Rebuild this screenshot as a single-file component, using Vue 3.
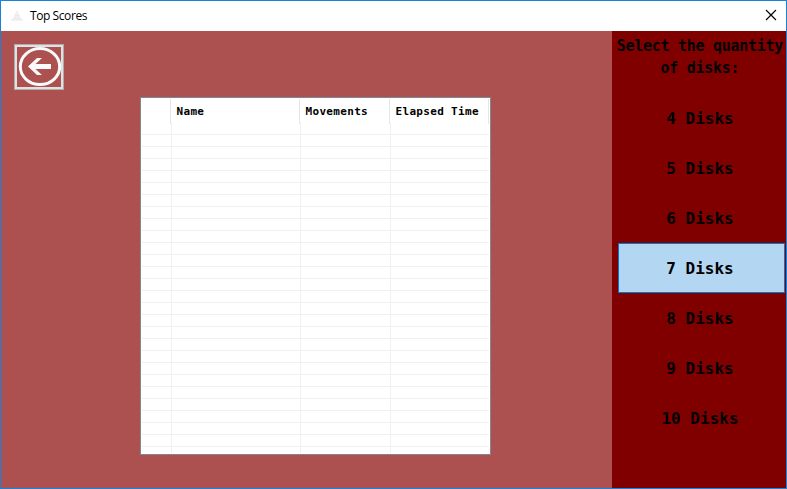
<script setup>
import { ref } from 'vue'

const counts = [4, 5, 6, 7, 8, 9, 10]
const selected = ref(7)
const columns = ['', 'Name', 'Movements', 'Elapsed Time']
const rows = 28
</script>

<template>
  <div class="window">
    <header class="titlebar">
      <svg class="app-icon" width="12" height="10" viewBox="0 0 12 10">
        <path d="M5 0h2v2h1v2h1v2h1v2h2v2H0V8h2V6h1V4h1V2h1z" fill="#f3eff1" />
        <path d="M4 4.5h4M2 7.5h8" stroke="#ece7ea" />
      </svg>
      <span class="title">Top Scores</span>
      <svg class="close" width="12" height="12" viewBox="0 0 12 12">
        <path d="M1 1l10 10M11 1L1 11" stroke="#000" stroke-width="1.15" />
      </svg>
    </header>
    <div class="content">
      <main class="main">
        <button class="back" aria-label="Back">
          <svg width="44" height="40" viewBox="0 0 44 40">
            <ellipse cx="23" cy="19.6" rx="19.7" ry="18" fill="none" stroke="#fafafa" stroke-width="3" />
            <path d="M11 19.6L20 11H25L18.5 17H34V22H18.5L25 28H20Z" fill="#fafafa" />
          </svg>
        </button>
        <section class="table">
          <div class="head">
            <div v-for="(c, i) in columns" :key="i" class="th"><span>{{ c }}</span></div>
          </div>
          <div class="body">
            <div v-for="r in rows" :key="r" class="row">
              <i v-for="(c, i) in columns" :key="i" class="td"></i>
            </div>
          </div>
        </section>
      </main>
      <aside class="side">
        <h2 class="prompt"><span>Select the quantity</span><span>of disks:</span></h2>
        <button
          v-for="n in counts"
          :key="n"
          class="disk"
          :class="{ active: n === selected }"
          @click="selected = n"
        >{{ n }} Disks</button>
      </aside>
    </div>
  </div>
</template>

<style>
body { overflow: hidden; }
</style>

<style scoped>
* { box-sizing: border-box; }
.window {
  width: 787px;
  height: 489px;
  display: flex;
  flex-direction: column;
  border: 1px solid #1883d7;
  background: #fff;
}
.titlebar {
  height: 30px;
  flex: none;
  display: flex;
  align-items: center;
  padding: 0 9px 0 10px;
}
.app-icon { margin: -1px 7px 0 0; }
.title {
  flex: 1;
  font: 12px/16px "Open Sans", "Noto Sans", sans-serif;
  letter-spacing: -0.42px;
  color: #000;
}
.close { margin-top: -2px; }
.content { flex: 1; display: flex; min-height: 0; }
.main {
  width: 611px;
  display: flex;
  align-items: flex-start;
  background: #ac5150;
}
.back {
  width: 50px;
  height: 46px;
  margin: 13px 0 0 13px;
  padding: 0;
  display: flex;
  align-items: center;
  justify-content: center;
  border: 1px solid #adadad;
  box-shadow: inset 0 0 0 2px #e1e1e1;
  background: #ac5150;
}
.back svg { display: block; }
.table {
  width: 351px;
  height: 358px;
  margin: 66px 0 0 76px;
  border: 1px solid #828790;
  padding: 1px;
  background: #fff;
  overflow: hidden;
}
.head, .row {
  display: grid;
  grid-template-columns: 29px 129px 90px 99px;
}
.head { height: 24px; }
.th {
  border-right: 1px solid #e5e5e5;
  padding: 0 0 0 5.5px;
  font: bold 11px/25px "DejaVu Sans Mono", monospace;
  letter-spacing: 0.33px;
  white-space: nowrap;
  color: #000;
}
.body { height: 330px; overflow: hidden; }
.row {
  height: 12px;
  grid-template-columns: 30px 129px 90px 98px;
  border-bottom: 1px solid #f0f0f0;
}
.td { border-right: 1px solid #f0f0f0; }
.td:last-child { border-right: 0; }
.side {
  flex: 1;
  padding: 0 1px 0 6px;
  background: #800000;
}
.prompt {
  height: 62px;
  margin: 0 -3px 0 -6px;
  padding-top: 4px;
  display: flex;
  flex-direction: column;
  align-items: center;
  font: bold 15px/22px "DejaVu Sans Mono", monospace;
  letter-spacing: -0.28px;
  white-space: nowrap;
  color: #000;
}
.disk {
  display: block;
  width: 167px;
  height: 50px;
  padding: 1px 3px 0 0;
  border: 1px solid transparent;
  background: transparent;
  color: #000;
  font: bold 16px/47px "DejaVu Sans Mono", monospace;
}
.disk.active {
  border-color: #0078d7;
  background: #b3d6f2;
}
</style>
